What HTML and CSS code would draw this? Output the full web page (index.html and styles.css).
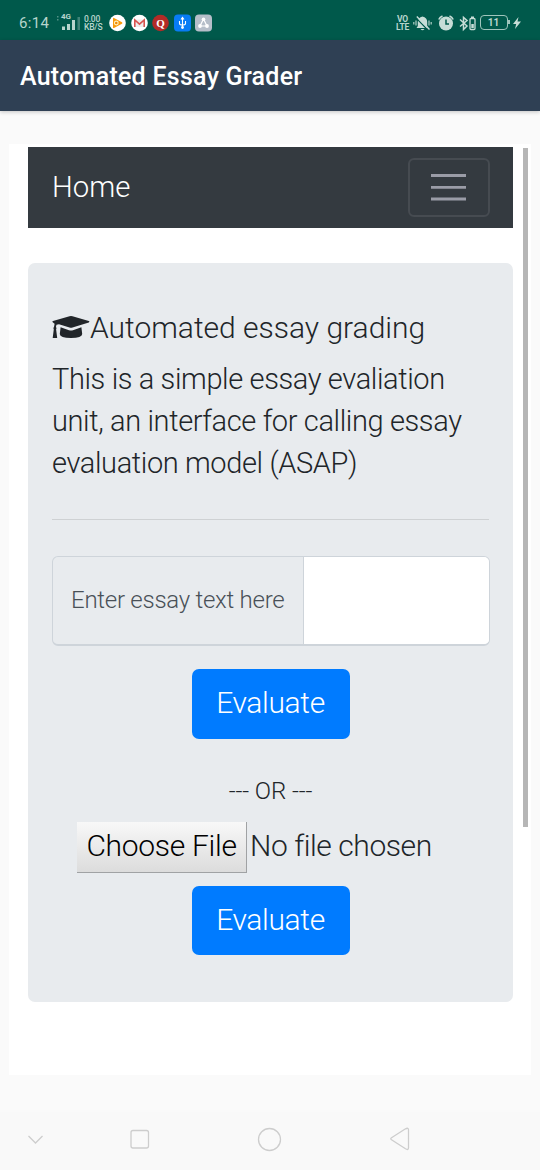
FILE: index.html
```html
<!DOCTYPE html>
<html lang="en">
<head>
<meta charset="utf-8">
<title>Automated Essay Grader</title>
<link rel="stylesheet" href="styles.css">
</head>
<body>
<div class="status">
  <span class="clock">6:14</span>
  <div class="signal">
    <span class="net">4G</span>
    <svg width="24" height="18" viewBox="0 0 24 18"><g fill="#b7d5cd"><path d="M0 2h1.5v1.5H0zM0 5h1.500v1.500H0z" opacity=".45"/><path d="M5 12.500h3V16H5zM10 10h3v6h-3zM15 6h3v10h-3z"/><path d="M20.500 3h2.500v13h-2.500z" opacity=".35"/></g></svg>
  </div>
  <span class="tiny speed"><span>0.00</span><span>KB/S</span></span>
  <svg class="app" width="17" height="18" viewBox="0 0 17 18"><circle cx="8.500" cy="9" r="8.300" fill="#fff"/><path d="M4 4.500q0-1 1-.5l8 4.300q.9.700 0 1.400l-8 4.300q-1 .3-1-.6z" fill="#f99a0a"/><circle cx="7.300" cy="9" r="2.400" fill="#fff3c4"/><circle cx="7.300" cy="9" r="1.300" fill="#ef8b06"/></svg>
  <svg class="app" width="17" height="18" viewBox="0 0 17 18"><circle cx="8.500" cy="9" r="8.300" fill="#fff"/><path d="M3.500 5.500h10v7.500h-10z" fill="#eee"/><path d="M3.800 13V6l4.700 4.200L13.200 6v7" fill="none" stroke="#d95550" stroke-width="1.600"/></svg>
  <svg class="app" width="17" height="18" viewBox="0 0 17 18"><circle cx="8.500" cy="9" r="8.300" fill="#b22b27"/><text x="8.500" y="12.500" text-anchor="middle" class="q">Q</text></svg>
  <svg class="app" width="17" height="18" viewBox="0 0 17 18"><rect y=".5" width="17" height="17" rx="4" fill="#087cf5"/><path d="M8.500 4v9M5.500 7v2.500q0 1.500 3 1.500t3-1.500V7M7 5.500L8.500 3.500 10 5.500" fill="none" stroke="#fff" stroke-width="1.100"/><circle cx="8.500" cy="13.500" r="1.400" fill="#fff"/></svg>
  <svg class="app" width="17" height="18" viewBox="0 0 17 18"><rect y=".5" width="17" height="17" rx="4" fill="#b5bec9"/><path d="M8.500 5L5 12M8.500 5L12 12M5 12h7" stroke="#fff" stroke-width="1.200"/><g fill="#fff"><circle cx="8.500" cy="5.200" r="1.800"/><circle cx="5" cy="12" r="1.900"/><circle cx="12" cy="12" r="1.900"/></g></svg>
  <span class="tiny volte"><span>VO</span><span>LTE</span></span>
  <svg class="bell" width="19" height="18" viewBox="0 0 19 18"><path d="M3.500 14l1.300-2V8q0-4.500 4.700-5.500 4.700 1 4.700 5.500v4l1.300 2zM7.500 15h4q-2 2.500-4 0z" fill="#c7ddd7"/><path d="M3 3.800L14.800 16" stroke="#00594b" stroke-width="1.200"/><path d="M3.800 2.500L16.500 15.500" stroke="#c7ddd7" stroke-width="1.400"/><path d="M3 6.500v5M.8 8v2.500M16 6.500v5M18.200 8v2.500" stroke="#a3c7be" stroke-width="1.300"/></svg>
  <svg class="alarm" width="16" height="18" viewBox="0 0 16 18"><circle cx="8" cy="9.500" r="7" fill="#c7ddd7"/><path d="M.8 5.500Q2 3 4.500 2M15.200 5.500Q14 3 11.500 2" fill="none" stroke="#c7ddd7" stroke-width="1.600"/><path d="M8 5.500V10h3" fill="none" stroke="#00594b" stroke-width="1.500"/></svg>
  <svg class="bt" width="17" height="18" viewBox="0 0 17 18"><path d="M1 5.500l7 6.500-3.500 3.500v-12L8 6.500 1 12.500" fill="none" stroke="#c7ddd7" stroke-width="1.500"/><rect x="11" y="4.500" width="5" height="11" rx="1" fill="none" stroke="#c7ddd7" stroke-width="1.300"/><path d="M12 2.500h3V4h-3zM12.300 10h2.500v4h-2.500z" fill="#c7ddd7"/></svg>
  <span class="battery">11</span>
  <svg class="bolt" width="8" height="12" viewBox="0 0 8 12"><path d="M5.500 0L0 7h3.200L2 12l6-7.500H4.500z" fill="#c7ddd7"/></svg>
</div>
<header class="appbar">Automated Essay Grader</header>
<main class="stage">
  <div class="webview">
    <nav class="navbar"><span class="brand">Home</span>
      <div class="toggler"><svg width="35" height="28" viewBox="0 0 35 28"><path d="M0 2.500h35M0 14.300h35M0 26h35" stroke="#9a9ca7" stroke-width="2.800"/></svg></div>
    </nav>
    <section class="jumbotron">
      <h1 class="title"><svg class="cap" width="38" height="26" viewBox="0 0 38 26"><path d="M1 6L17.500 1.200q1.500-.4 3 0L36.800 6q1.200.7 0 1.400l-16.300 5.200q-1.500.5-3 0L7 9.300 4.500 9.800 3.900 12q1 1 .2 2.300L5.200 23H.7l1.100-8.700q-.8-1.300.2-2.300l.6-3.300L1 7.400Q-.2 6.700 1 6zM8.600 12.300l8.400 2.900q2 .6 4 0l8.400-2.900.8 6.700Q30 23 19 23T7.800 19z" fill="#212529"/></svg><span>Automated essay grading</span></h1>
      <p class="lead">This is a simple essay evaliation<br>unit, an interface for calling essay<br>evaluation model (ASAP)</p>
      <div class="rule"></div>
      <div class="group"><label class="label" for="essay">Enter essay text here</label><textarea id="essay" class="essay"></textarea></div>
      <button class="btn">Evaluate</button>
      <p class="or">--- OR ---</p>
      <div class="file"><button class="choose">Choose File</button><span class="none">No file chosen</span></div>
      <button class="btn second">Evaluate</button>
    </section>
    <div class="scrollbar"></div>
  </div>
</main>
<footer class="sysnav">
  <svg width="540" height="58" viewBox="0 0 540 58"><g fill="none" stroke="#cdcdcd" stroke-width="1.300"><path d="M28.500 24l7 7 7-7"/><rect x="131" y="18.500" width="17.500" height="17.500" rx="2"/><circle cx="269.500" cy="27.500" r="11"/><path d="M391.500 25.800l14-9q3-1.500 3 1v18q0 2.800-3 1l-14-9q-1.500-1 0-2z"/></g></svg>
</footer>
</body>
</html>
```
FILE: styles.css
```css
* { box-sizing: border-box; }
body { margin: 0; width: 540px; height: 1170px; overflow: hidden; background: #fafafa; font-family: Roboto, sans-serif; font-weight: 300; color: #212529; display: flex; flex-direction: column; }
svg { display: block; flex: none; }
p, h1 { margin: 0; font-weight: inherit; }
button, textarea { font: inherit; }
.status { height: 40px; flex: none; background: #00594b; color: #b7d5cd; display: flex; align-items: center; padding: 5px 0 0 19px; }
.clock { width: 38px; font-size: 15px; font-weight: 400; letter-spacing: .3px; white-space: nowrap; }
.signal { position: relative; width: 27px; }
.net { position: absolute; left: 4px; top: -1px; font-size: 8px; line-height: 8px; font-weight: 700; }
.tiny { display: flex; flex-direction: column; font-size: 8.500px; line-height: 8px; font-weight: 500; }
.speed { width: 25px; white-space: nowrap; letter-spacing: -.2px; }
.app { margin-right: 4.500px; }
.q { font: 700 11px "Liberation Serif", serif; fill: #fff; }
.volte { margin-left: 177px; width: 18px; align-items: center; letter-spacing: -.2px; font-weight: 700; }
.bell { margin-left: 1px; }
.alarm { margin-left: 6px; }
.bt { margin-left: 5px; }
.battery { position: relative; margin-left: 4px; width: 28px; height: 15px; border: 1.500px solid #9fc5bc; border-radius: 4px; font-size: 10px; font-weight: 700; line-height: 13px; text-align: center; }
.battery::after { content: ""; position: absolute; right: -3px; top: 4px; width: 2px; height: 4px; background: #9fc5bc; }
.bolt { margin-left: 5px; }
.appbar { height: 71px; flex: none; background: #2f4054; color: #fff; font-size: 25px; font-weight: 500; letter-spacing: .26px; line-height: 74px; padding-left: 20px; box-shadow: 0 1px 4px rgba(0,0,0,.22); }
.stage { height: 1001px; flex: none; padding: 33px 9px 0; }
.webview { position: relative; height: 931px; background: #fff; padding: 3px 18px 0 19px; }
.navbar { height: 81px; background: #343a40; display: flex; justify-content: space-between; align-items: center; padding: 0 23px 0 24px; color: #fff; }
.brand { font-size: 29.300px; line-height: 78px; margin-top: -2px; }
.toggler { width: 82px; height: 59px; border: 2px solid #464b51; border-radius: 6px; display: flex; align-items: center; justify-content: center; padding: 0 1px 1px 0; }
.jumbotron { margin-top: 35px; height: 739px; background: #e8ebee; border-radius: 7px; padding: 47px 24px 0; display: flex; flex-direction: column; }
.title { height: 36px; display: flex; align-items: center; font-size: 30px; line-height: 36px; white-space: nowrap; }
.lead { margin-top: 12px; font-size: 29px; letter-spacing: -.38px; line-height: 42px; white-space: nowrap; }
.rule { margin-top: 35px; height: 1px; background: #ced1d3; }
.group { width: 438px; margin-top: 36px; height: 90px; border: 1.500px solid #ced4da; border-bottom-width: 2px; border-radius: 6px; display: flex; overflow: hidden; }
.label { width: 251px; border-right: 1.500px solid #ced4da; padding-left: 18px; font-size: 24px; letter-spacing: -.26px; line-height: 87px; color: #495057; white-space: nowrap; }
.essay { flex: 1; min-width: 0; border: 0; background: #fff; resize: none; outline: 0; }
.btn { align-self: center; margin-top: 23px; width: 158px; height: 70px; border: 0; border-radius: 7px; background: #007bff; color: #fff; font-size: 30px; letter-spacing: -.35px; line-height: 66px; padding: 0 0 2px; }
.or { margin-top: 34px; text-align: center; font-size: 24px; letter-spacing: -.1px; line-height: 36px; }
.file { margin: 13px 0 0 25px; display: flex; height: 51px; font-size: 30px; letter-spacing: -.42px; line-height: 48px; white-space: nowrap; }
.choose { width: 170px; border: solid #a0a2a4; border-width: 0 1px 1px 0; background: linear-gradient(#f8f8f8, #dcdcdc); padding: 0 0 3px; line-height: 46px; color: #000; letter-spacing: -.3px; }
.none { margin-left: 3px; }
.second { margin-top: 13px; height: 69px; }
.scrollbar { position: absolute; right: 3px; top: 4px; width: 5px; height: 679px; background: #b6b6b6; }
.sysnav { height: 58px; flex: none; background: #f9f9f9; }
```
